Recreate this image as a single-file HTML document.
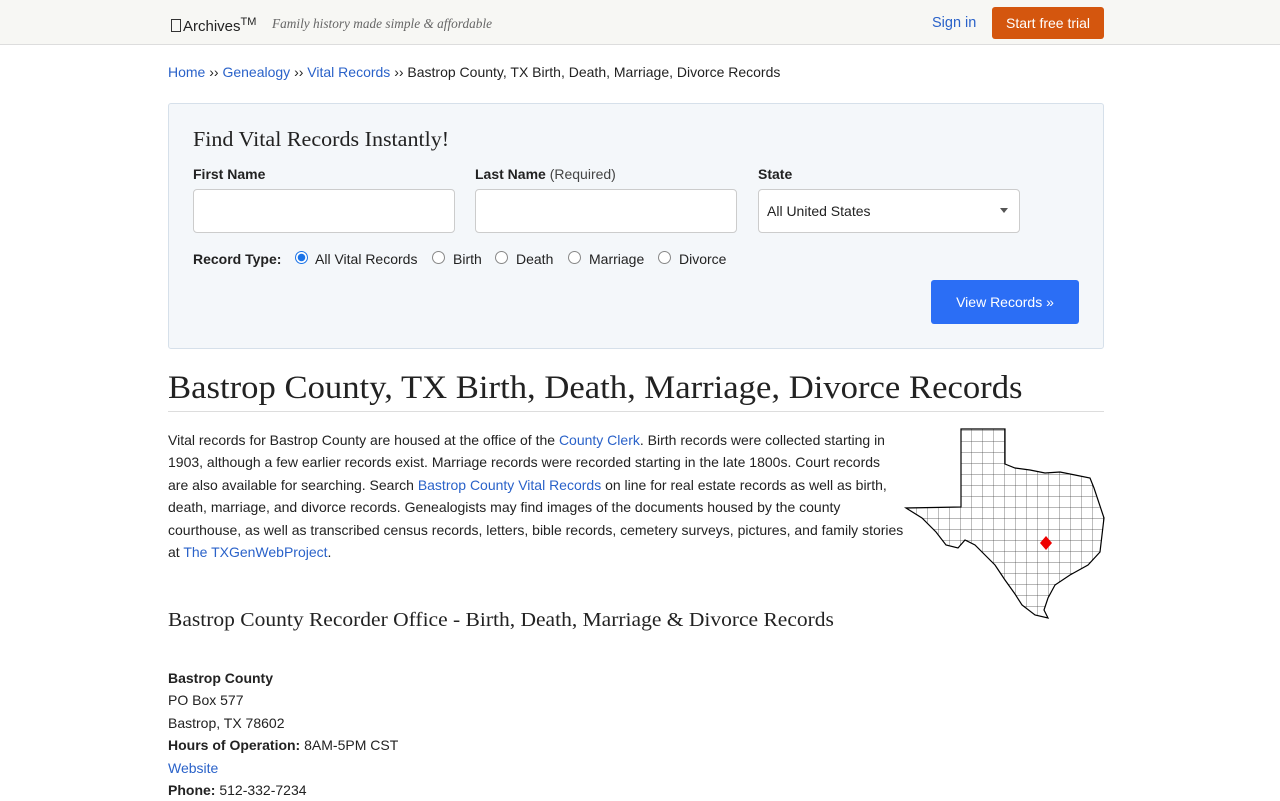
<!DOCTYPE html>
<html><head><meta charset="utf-8"><style>
*{box-sizing:border-box;margin:0;padding:0}
body{width:1280px;height:800px;overflow:hidden;background:#fff;font-family:"Liberation Sans",Arial,sans-serif;color:#222;font-size:14px;position:relative}
.a{position:absolute;white-space:nowrap}
a{color:#2a62c9;text-decoration:none}
.hdr{position:absolute;left:0;top:0;width:1280px;height:45px;background:#f7f7f4;border-bottom:1px solid #ddd}
.serif{font-family:"Liberation Serif","DejaVu Serif",serif;transform-origin:0 0}
.box{position:absolute;left:168px;top:103px;width:936px;height:246px;background:#f4f7fa;border:1px solid #d6e0ea;border-radius:3px}
.in{position:absolute;height:44px;background:#fff;border:1px solid #ccc;border-radius:4px}
.lab{font-weight:bold;font-size:14px}
.r{position:absolute;width:13px;height:13px;border:1px solid #888;border-radius:50%;background:#fff}
.p{position:absolute;left:168px;font-size:14px;line-height:22.4px;color:#222;white-space:nowrap}
</style></head><body>
<div class="hdr"></div>
<div class="a" style="left:171px;top:16px;font-size:15px;color:#222"><span style="display:inline-block;width:10px;height:13px;border:1px solid #333;vertical-align:-1px;margin-right:2px"></span>Archives<sup style="font-size:11px">TM</sup></div>
<div class="a serif" style="left:272px;top:17px;font-size:14px;font-style:italic;color:#666;transform:scaleX(0.95)">Family history made simple &amp; affordable</div>
<div class="a" style="left:932px;top:15px;font-size:14.5px"><a>Sign in</a></div>
<div class="a" style="left:992px;top:7px;width:112px;height:32px;background:#d4560e;border-radius:3px;color:#fff;font-size:14px;line-height:32px;text-align:center">Start free trial</div>

<div class="a" style="left:168px;top:64px;font-size:14px"><a>Home</a> ›› <a>Genealogy</a> ›› <a>Vital Records</a> ›› Bastrop County, TX Birth, Death, Marriage, Divorce Records</div>

<div class="box"></div>
<div class="a serif" style="left:193px;top:127px;font-size:21px;color:#222;transform:scaleX(1.05)">Find Vital Records Instantly!</div>
<div class="a lab" style="left:193px;top:166px">First Name</div>
<div class="a" style="left:475px;top:166px"><b>Last Name</b> <span style="color:#444">(Required)</span></div>
<div class="a lab" style="left:758px;top:166px">State</div>
<div class="in" style="left:193px;top:189px;width:262px"></div>
<div class="in" style="left:475px;top:189px;width:262px"></div>
<div class="in" style="left:758px;top:189px;width:262px"></div>
<div class="a" style="left:767px;top:203px;font-size:14px">All United States</div>
<div class="a" style="left:1000px;top:208px;width:0;height:0;border-left:4px solid transparent;border-right:4px solid transparent;border-top:5px solid #555"></div>
<div class="a lab" style="left:193px;top:251px">Record Type:</div>
<div class="r" style="left:295px;top:251px;border-color:#1a73e8;background:radial-gradient(circle,#1a73e8 3.5px,#fff 4px)"></div>
<div class="a" style="left:315px;top:251px">All Vital Records</div>
<div class="r" style="left:432px;top:251px"></div><div class="a" style="left:453px;top:251px">Birth</div>
<div class="r" style="left:495px;top:251px"></div><div class="a" style="left:516px;top:251px">Death</div>
<div class="r" style="left:568px;top:251px"></div><div class="a" style="left:589px;top:251px">Marriage</div>
<div class="r" style="left:658px;top:251px"></div><div class="a" style="left:679px;top:251px">Divorce</div>
<div class="a" style="left:931px;top:280px;width:148px;height:44px;background:#2b6ef5;border-radius:3px;color:#fff;font-size:14px;line-height:44px;text-align:center">View Records »</div>

<div class="a serif" style="left:168px;top:370px;font-size:33px;color:#222;transform:scaleX(1.05)">Bastrop County, TX Birth, Death, Marriage, Divorce Records</div>
<div class="a" style="left:168px;top:411px;width:936px;height:1px;background:#ddd"></div>

<div class="p" style="top:429px">Vital records for Bastrop County are housed at the office of the <a>County Clerk</a>. Birth records were collected starting in<br>1903, although a few earlier records exist. Marriage records were recorded starting in the late 1800s. Court records<br>are also available for searching. Search <a>Bastrop County Vital Records</a> on line for real estate records as well as birth,<br>death, marriage, and divorce records. Genealogists may find images of the documents housed by the county<br>courthouse, as well as transcribed census records, letters, bible records, cemetery surveys, pictures, and family stories<br>at <a>The TXGenWebProject</a>.</div>

<svg class="a" style="left:900px;top:424px" width="210" height="200" viewBox="900 424 210 200">
<defs>
<pattern id="g" x="3" y="1" width="11" height="11" patternUnits="userSpaceOnUse"><path d="M0 0H11M0 0V11" stroke="#444" stroke-width="0.7" fill="none"/></pattern>
<clipPath id="c"><path d="M961 429L1005 429L1005 464L1015 468L1030 470L1045 473L1060 472L1075 475L1090 478L1094 488L1098 500L1104 518L1102 535L1100 552L1088 565L1070 575L1055 585L1048 598L1044 610L1048 618L1035 615L1022 605L1015 594L1005 580L995 565L985 555L975 545L965 540L958 548L946 545L936 532L922 518L906 508L961 507Z"/></clipPath>
</defs>
<g clip-path="url(#c)"><rect x="900" y="424" width="210" height="200" fill="url(#g)"/></g>
<path d="M961 429L1005 429L1005 464L1015 468L1030 470L1045 473L1060 472L1075 475L1090 478L1094 488L1098 500L1104 518L1102 535L1100 552L1088 565L1070 575L1055 585L1048 598L1044 610L1048 618L1035 615L1022 605L1015 594L1005 580L995 565L985 555L975 545L965 540L958 548L946 545L936 532L922 518L906 508L961 507Z" fill="none" stroke="#000" stroke-width="1.2"/>
<path d="M1040 543L1046 536L1052 543L1046 550Z" fill="#e00"/>
</svg>

<div class="a serif" style="left:168px;top:609px;font-size:20px;color:#222;transform:scaleX(1.075)">Bastrop County Recorder Office - Birth, Death, Marriage &amp; Divorce Records</div>

<div class="p" style="top:667px"><b>Bastrop County</b><br>PO Box 577<br>Bastrop, TX 78602<br><b>Hours of Operation:</b> 8AM-5PM CST<br><a>Website</a><br><b>Phone:</b> 512-332-7234</div>
</body></html>
